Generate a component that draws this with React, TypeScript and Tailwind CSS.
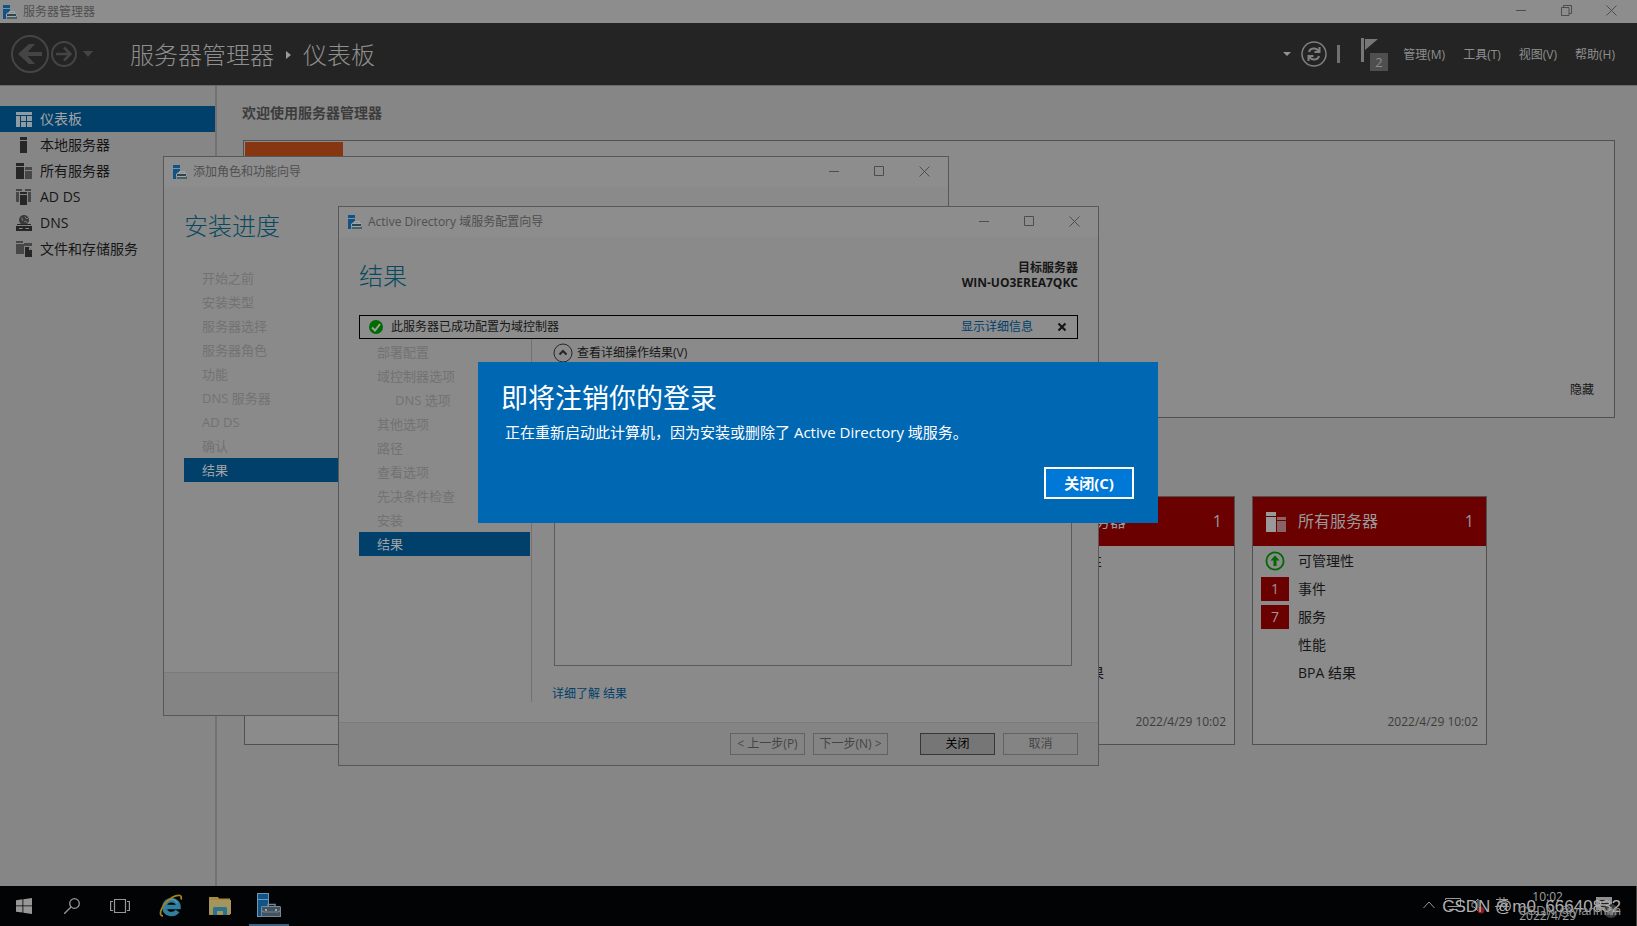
import type { ReactNode } from "react"

const menus = ["管理(M)", "工具(T)", "视图(V)", "帮助(H)"]

const navItems = [
  { label: "仪表板", icon: <DashboardIcon />, active: true },
  { label: "本地服务器", icon: <LocalServerIcon /> },
  { label: "所有服务器", icon: <AllServersIcon /> },
  { label: "AD DS", icon: <AdDsIcon /> },
  { label: "DNS", icon: <DnsIcon /> },
  { label: "文件和存储服务", icon: <StorageIcon /> },
]

const installSteps = [
  { label: "开始之前" },
  { label: "安装类型" },
  { label: "服务器选择" },
  { label: "服务器角色" },
  { label: "功能" },
  { label: "DNS 服务器" },
  { label: "AD DS" },
  { label: "确认" },
  { label: "结果", active: true },
]

const configSteps = [
  { label: "部署配置" },
  { label: "域控制器选项" },
  { label: "DNS 选项", nested: true },
  { label: "其他选项" },
  { label: "路径" },
  { label: "查看选项" },
  { label: "先决条件检查" },
  { label: "安装" },
  { label: "结果", active: true },
]

function ServerManagerIcon() {
  return (
    <svg viewBox="0 0 14 14" className="size-[14px]" aria-hidden="true">
      <path fill="#0f5488" d="M0 0h7v3H0zM0 4h7v2L4 8 3 9v5H0z" />
      <path fill="#2f444f" d="M4 9h10v5H4z" />
      <path fill="#46606d" d="M4 12h10v2H4z" />
      <path fill="none" stroke="#9fa6a9" d="M6.500 8.500v-2h5v2M3.500 11V9.500l1-1h8.500l.5 1V11M4 11.500h9.500" />
    </svg>
  )
}

function ServerManagerTaskIcon() {
  return (
    <svg viewBox="0 0 24 24" className="size-6" aria-hidden="true">
      <path fill="#7297ad" d="M0 0h12v24H0z" />
      <path fill="#0f5488" d="M1 1h10v5H1zM1 7h10v16H1z" />
      <path fill="none" stroke="#788790" strokeWidth="1.500" d="M11 13.500v-2h7v2" />
      <path fill="#788790" d="M5 13h18l1 1v10H4V14z" />
      <path fill="#3f5361" d="M5 14h18v3l-2 1.500H7L5 17zM5 18.500l1.500 1h15l1.500-1V23H5z" />
      <path fill="#9aa6ac" d="M8 16h2v2H8zM18 16h2v2h-2z" />
    </svg>
  )
}

function DashboardIcon() {
  return (
    <svg viewBox="0 0 16 16" className="size-4" fill="#8f9ba3" aria-hidden="true">
      <path d="M0 1h16v3H0zM0 5h4v11H0zM5 5h5v5H5zM11 5h5v5h-5zM5 11h5v5H5zM11 11h5v5h-5z" />
    </svg>
  )
}

function LocalServerIcon() {
  return (
    <svg viewBox="0 0 16 16" className="size-4" fill="#262626" aria-hidden="true">
      <path d="M4 0h7v3H4zM4 4h7v12H4z" />
    </svg>
  )
}

function AllServersIcon() {
  return (
    <svg viewBox="0 0 16 16" className="size-4" aria-hidden="true">
      <path fill="#262626" d="M0 0h8v3H0zM0 4h8v12H0z" />
      <path fill="#474747" d="M9 4h7v3H9zM9 8h7v8H9z" />
    </svg>
  )
}

function AdDsIcon() {
  return (
    <svg viewBox="0 0 16 16" className="size-4" aria-hidden="true">
      <path fill="#474747" d="M0 0h6v2H0zM0 3h3v10H0zM9 0h6v2H9zM12 3h3v10h-3z" />
      <path fill="#262626" d="M4 3h7v2H4zM4 6h7v10H4z" />
    </svg>
  )
}

function DnsIcon() {
  return (
    <svg viewBox="0 0 16 16" className="size-4" aria-hidden="true">
      <circle cx="8" cy="5" r="5" fill="#3a3a3a" />
      <path fill="none" stroke="#747474" d="M5 3l2 1-1 2M9 1.500l1 2 2 0M8 7l2-1 1 2" />
      <path fill="#262626" d="M1 9h14v2H1zM0 11h16v5H0z" />
      <path stroke="#858585" d="M3 13.500h3.500M9.500 13.500h3.500M0 10.500h16" />
    </svg>
  )
}

function StorageIcon() {
  return (
    <svg viewBox="0 0 16 16" className="size-4" aria-hidden="true">
      <path fill="#474747" d="M0 0h7v2H0zM0 3h8v10H0zM8 2h8v3H8z" />
      <path fill="#262626" d="M9 6h4l3 3v7H9z" />
      <path fill="#858585" d="M13 6l3 3h-3z" />
    </svg>
  )
}

function WindowControls({ restore = false }: { restore?: boolean }) {
  return (
    <div className="mb-0.5 ml-auto flex items-center gap-[34px]">
      <button type="button" aria-label="最小化" className="size-[11px]">
        <svg viewBox="0 0 11 11" className="size-[11px]" stroke="#4d4d4d">
          <path d="M0 5.500h10" />
        </svg>
      </button>
      <button type="button" aria-label="最大化" className="size-[11px]">
        <svg viewBox="0 0 11 11" className="size-[11px]" fill="none" stroke="#4d4d4d">
          {restore ? <path d="M.5 2.500h7.500v8H.5zM2.500 2.500v-2h8v8H8" /> : <path d="M.5.5h9v9h-9z" />}
        </svg>
      </button>
      <button type="button" aria-label="关闭窗口" className="size-[11px]">
        <svg viewBox="0 0 11 11" className="size-[11px]" stroke="#4d4d4d">
          <path d="M.5.5l10 10M10.500.5l-10 10" />
        </svg>
      </button>
    </div>
  )
}

function WizardTitleBar({ title }: { title: string }) {
  return (
    <div className="flex h-[30px] shrink-0 items-center bg-[#8d8d8d] pl-[9px] pr-[18px] text-xs text-[#4f4f4f]">
      <ServerManagerIcon />
      <span className="ml-1.5">{title}</span>
      <WindowControls />
    </div>
  )
}

type Step = { label: string; active?: boolean; nested?: boolean }

function StepList({ steps }: { steps: Step[] }) {
  return (
    <ul className="text-[13px] leading-6 text-[#727272]">
      {steps.map((step) => (
        <li
          key={step.label}
          className={
            step.active
              ? "bg-[#00406b] pl-[18px] text-[#a3a3a3]"
              : step.nested
                ? "pl-9"
                : "pl-[18px]"
          }
        >
          {step.label}
        </li>
      ))}
    </ul>
  )
}

function WizardButton({ children, primary = false }: { children: ReactNode; primary?: boolean }) {
  return (
    <button
      type="button"
      className={
        primary
          ? "h-[22px] w-[75px] whitespace-nowrap border border-[#363636] bg-[#767676] text-black"
          : "h-[22px] w-[75px] whitespace-nowrap border border-[#626262] text-[#444444]"
      }
    >
      {children}
    </button>
  )
}

function ServerCard({ title, icon }: { title: string; icon: ReactNode }) {
  return (
    <article className="flex h-[249px] w-[235px] shrink-0 flex-col border border-[#505050] bg-[#8b8b8b]">
      <h3 className="flex h-[49px] items-center bg-[#6b0000] pl-[13px] pr-3 text-base text-[#999999]">
        {icon}
        <span className="mb-0.5 ml-3">{title}</span>
        <span className="mb-0.5 ml-auto">1</span>
      </h3>
      <ul className="pt-px text-sm leading-7 text-[#161616]">
        <li className="flex items-center pl-2">
          <span className="flex w-7 justify-center">
            <svg viewBox="0 0 20 20" className="size-5" fill="none" stroke="#006800" strokeWidth="1.800">
              <circle cx="10" cy="10" r="8.600" />
              <path fill="#006800" stroke="none" d="M10 4.500l4.500 5h-3V15h-3V9.500h-3z" />
            </svg>
          </span>
          <span className="ml-[9px]">可管理性</span>
        </li>
        <li className="flex items-center pl-2">
          <span className="h-6 w-7 bg-[#6b0000] text-center leading-6 text-[#999999]">1</span>
          <span className="ml-[9px]">事件</span>
        </li>
        <li className="flex items-center pl-2">
          <span className="h-6 w-7 bg-[#6b0000] text-center leading-6 text-[#999999]">7</span>
          <span className="ml-[9px]">服务</span>
        </li>
        <li className="pl-[45px]">性能</li>
        <li className="pl-[45px]">BPA 结果</li>
      </ul>
      <time className="mb-3.5 mt-auto pr-2 text-right text-xs text-[#3c3c3c]">2022/4/29 10:02</time>
    </article>
  )
}

function Header() {
  return (
    <header className="flex h-[62px] shrink-0 items-center bg-[#242424] pl-[11px] pr-[22px] text-[#8f8f8f]">
      <button type="button" aria-label="后退">
        <svg viewBox="0 0 38 38" className="size-[38px]" fill="none" stroke="#454545">
          <circle cx="19" cy="19" r="18" strokeWidth="2" />
          <path strokeWidth="4" d="M31 19H10" />
          <path fill="#454545" stroke="none" d="M7 19L18 9h6l-9 10 9 10h-6z" />
        </svg>
      </button>
      <button type="button" aria-label="前进" className="ml-0.5">
        <svg viewBox="0 0 26 26" className="size-[26px]" fill="none" stroke="#454545">
          <circle cx="13" cy="13" r="12" strokeWidth="2" />
          <path strokeWidth="2.500" d="M5 13h14M13 6.500l6.500 6.500-6.500 6.500" />
        </svg>
      </button>
      <svg viewBox="0 0 10 6" className="ml-1.5 h-1.5 w-2.5" fill="#454545" aria-hidden="true">
        <path d="M0 0h10L5 6z" />
      </svg>
      <h1 className="ml-[37px] flex items-center pt-0.5 text-2xl font-light">
        服务器管理器
        <svg viewBox="0 0 5 8" className="mx-3 h-2 w-[5px]" fill="#9a9a9a" aria-hidden="true">
          <path d="M0 0l5 4-5 4z" />
        </svg>
        仪表板
      </h1>
      <div className="ml-auto flex items-center">
        <svg viewBox="0 0 8 4" className="h-1 w-2" fill="#929292" aria-hidden="true">
          <path d="M0 0h8L4 4z" />
        </svg>
        <button type="button" aria-label="刷新" className="ml-2.5">
          <svg viewBox="0 0 26 26" className="size-[26px]" fill="none" stroke="#808080">
            <circle cx="13" cy="13" r="12" strokeWidth="1.500" />
            <path strokeWidth="2" d="M8 11c1-4 7-5 9.500-1M18.500 6v5h-5M18 15c-1 4-7 5-9.500 1M7.500 20v-5h5" />
          </svg>
        </button>
        <span className="ml-2.5 h-[18px] w-[3px] bg-[#707070]" />
        <button type="button" aria-label="通知" className="ml-[21px] h-9 w-7">
          <svg viewBox="0 0 28 36" className="h-9 w-7" aria-hidden="true">
            <path fill="#777777" d="M0 2h3v24H0zM4 3h13L4 14z" />
            <path fill="#4f4f4f" d="M9 17h18v18H9z" />
            <text x="18" y="31" fill="#8c8c8c" fontSize="13" textAnchor="middle">
              2
            </text>
          </svg>
        </button>
        <nav className="ml-3.5 flex gap-[18px] pt-0.5 text-xs">
          {menus.map((menu) => (
            <button type="button" key={menu}>
              {menu}
            </button>
          ))}
        </nav>
      </div>
    </header>
  )
}

function InstallWizard() {
  return (
    <section className="absolute left-[163px] top-[156px] flex h-[560px] w-[786px] flex-col border border-[#585858] bg-[#8a8a8a]">
      <WizardTitleBar title="添加角色和功能向导" />
      <h2 className="ml-5 mt-[23px] text-2xl font-light leading-8 text-[#07495f]">安装进度</h2>
      <div className="ml-5 mt-6 w-[170px]">
        <StepList steps={installSteps} />
      </div>
      <div className="mt-auto h-[43px] border-t border-[#7a7a7a] bg-[#848484]" />
    </section>
  )
}

function ConfigWizard() {
  return (
    <section className="absolute left-[338px] top-[206px] flex h-[560px] w-[761px] flex-col border border-[#585858] bg-[#8a8a8a] text-xs text-[#161616]">
      <WizardTitleBar title="Active Directory 域服务配置向导" />
      <div className="flex items-start justify-between px-5 pt-[23px]">
        <h2 className="text-2xl font-light leading-8 text-[#07495f]">结果</h2>
        <p className="text-right font-bold leading-[15px]">
          目标服务器
          <br />
          WIN-UO3EREA7QKC
        </p>
      </div>
      <div className="mx-5 mt-[23px] flex h-6 shrink-0 items-center border border-black bg-[#8d8d8d] pl-[9px] pr-2.5">
        <svg viewBox="0 0 14 14" className="size-3.5" aria-hidden="true">
          <circle cx="7" cy="7" r="7" fill="#006b00" />
          <path fill="none" stroke="#a0a0a0" strokeWidth="2" d="M3 7.500l3 3 5-6.500" />
        </svg>
        <span className="ml-2">此服务器已成功配置为域控制器</span>
        <a href="#details" className="ml-auto text-[#00406b]">
          显示详细信息
        </a>
        <button type="button" aria-label="关闭消息" className="ml-6">
          <svg viewBox="0 0 10 10" className="size-2.5" stroke="#161616" strokeWidth="2.200">
            <path d="M1.500 1.500l7 7M8.500 1.500l-7 7" />
          </svg>
        </button>
      </div>
      <div className="flex grow pb-5 pl-5 pr-[26px]">
        <div className="w-[171px] pt-px">
          <StepList steps={configSteps} />
        </div>
        <div className="ml-px w-px bg-[#727272]" />
        <div className="flex grow flex-col pl-[22px] pt-1">
          <button type="button" className="-ml-px flex h-5 items-center">
            <svg viewBox="0 0 20 20" className="size-5" fill="none" stroke="#262626">
              <circle cx="10" cy="10" r="9" />
              <path strokeWidth="2" d="M6.500 11.500L10 8l3.500 3.500" />
            </svg>
            <span className="ml-1">查看详细操作结果(V)</span>
          </button>
          <div className="mt-1 grow border border-[#5b5b5b] bg-[#8c8c8c]" />
          <a href="#learn" className="-ml-0.5 mt-5 leading-4 text-[#00406b]">
            详细了解 结果
          </a>
        </div>
      </div>
      <div className="flex h-[43px] shrink-0 items-center justify-end border-t border-[#7a7a7a] bg-[#848484] pr-5">
        <WizardButton>&lt; 上一步(P)</WizardButton>
        <span className="w-2" />
        <WizardButton>下一步(N) &gt;</WizardButton>
        <span className="w-8" />
        <WizardButton primary>关闭</WizardButton>
        <span className="w-2" />
        <WizardButton>取消</WizardButton>
      </div>
    </section>
  )
}

function LogoffDialog() {
  return (
    <section
      role="dialog"
      aria-labelledby="logoff-title"
      className="absolute left-[478px] top-[362px] flex h-[161px] w-[680px] flex-col bg-[#0067b3] pb-6 pl-[23px] pr-6 pt-[18px] text-white"
    >
      <h2 id="logoff-title" className="text-[27px] leading-9">
        即将注销你的登录
      </h2>
      <p className="ml-1 mt-1 text-[15px] leading-6">
        正在重新启动此计算机，因为安装或删除了 Active Directory 域服务。
      </p>
      <button
        type="button"
        className="ml-auto mt-auto h-8 w-[90px] border-2 border-white bg-[#0078d7] text-[15px] font-bold leading-6"
      >
        关闭(C)
      </button>
    </section>
  )
}

function Taskbar() {
  return (
    <footer className="relative flex h-10 shrink-0 items-center bg-[#020305] pl-4">
      <button type="button" aria-label="开始">
        <svg viewBox="0 0 16 16" className="size-4" fill="#979797">
          <path d="M0 2.200l6.500-.9v6.200H0zM7.300 1.200L16 0v7.500H7.300zM0 8.300h6.500v6.300L0 13.700zM7.300 8.300H16V16l-8.700-1.300z" />
        </svg>
      </button>
      <button type="button" aria-label="搜索" className="ml-8">
        <svg viewBox="0 0 16 16" className="size-4" fill="none" stroke="#979797" strokeWidth="1.300">
          <circle cx="10.500" cy="5.500" r="4.800" />
          <path d="M7 9l-7 7" />
        </svg>
      </button>
      <button type="button" aria-label="任务视图" className="ml-[30px]">
        <svg viewBox="0 0 20 16" className="h-4 w-5" fill="none" stroke="#979797" strokeWidth="1.200">
          <path d="M4.500 1.500h11v13h-11zM3 3.500H.6v9H3M17 3.500h2.400v9H17" />
        </svg>
      </button>
      <button type="button" aria-label="Internet Explorer" className="ml-[29px]">
        <svg viewBox="0 0 24 24" className="size-6" fill="none">
          <path stroke="#2f7f9d" strokeWidth="4.500" d="M5.500 13h14c0-9-14-9-14 0 0 8.500 10 8.500 13 4" />
          <path stroke="#76a9b5" strokeWidth="1" d="M7 9c3-5 9-5 11 0" />
          <path stroke="#a78218" strokeWidth="1.800" d="M4 22c-3 0-4-4 1-11S17 .5 21 1.500c1.500.5 1.500 2 1 4" />
        </svg>
      </button>
      <button type="button" aria-label="文件资源管理器" className="ml-[26px]">
        <svg viewBox="0 0 22 18" className="h-[18px] w-[22px]">
          <path fill="#a88c3e" d="M0 0h9l1 1.500h11V18H0z" />
          <path fill="#a4955e" d="M1 3h21v14H0V4z" />
          <path fill="#287391" d="M4 11l1-1h12l1 1v7h-4v-4H8v4H4z" />
        </svg>
      </button>
      <button type="button" aria-label="服务器管理器" className="ml-[18px] flex h-10 w-10 items-center justify-center border-b-2 border-[#3b6281]">
        <ServerManagerTaskIcon />
      </button>

      <div className="ml-auto flex h-10 items-center border-r border-[#454545] pr-4 text-xs text-[#a0a0a0]">
        <svg viewBox="0 0 12 8" className="mb-0.5 h-2 w-3" fill="none" stroke="#979797" aria-hidden="true">
          <path d="M.5 7L6 1l5.500 6" />
        </svg>
        <svg viewBox="0 0 64 20" className="mb-0.5 ml-2.5 h-5 w-16" fill="none" stroke="#979797" aria-hidden="true">
          <path d="M.5 5V3.500h15v8h-13M4 14.500h8" />
          <path d="M27 8h2l4-4v12l-4-4h-2z" />
          <circle cx="36" cy="15" r="3.500" fill="#8a1c20" stroke="none" />
          <path d="M51 4.500h12M55 2v4M59 2v4M53 7h8v4h-8zM50 11.500h14M57 7v4l-5 5M57 11l6 5" />
        </svg>
        <div className="ml-2.5 text-center leading-[19px]">
          <div>10:02</div>
          <div>2022/4/29</div>
        </div>
        <svg viewBox="0 0 24 24" className="ml-5 h-6 w-6" aria-hidden="true">
          <path fill="#8f8f8f" d="M0 3h16v13h-4l-3 3v-3H0z" />
          <path stroke="#222222" d="M3 6.500h10M3 9.500h10M3 12.500h7" />
          <circle cx="15" cy="17" r="7" fill="#3a3a3a" />
          <path fill="#777777" d="M14 13h2v5h2l-3 4-3-4h2z" />
        </svg>
      </div>

      {/* watermarks over the tray */}
      <span className="pointer-events-none absolute right-4 top-[11px] font-['Liberation_Sans',sans-serif] text-[17px] leading-5 text-[#b0b0b0]">
        CSDN @m0_66640832
      </span>
      <span className="pointer-events-none absolute right-4 top-[15px] font-['Liberation_Sans',sans-serif] text-[13px] leading-5 text-[#8f8f8f]">
        CSDN @yianmnn
      </span>
    </footer>
  )
}

export default function App() {
  return (
    <div
      lang="zh-CN"
      className="relative flex min-h-screen flex-col overflow-hidden bg-[#868686] font-['Open_Sans','Noto_Sans_CJK_SC',sans-serif]"
    >
      <div className="flex h-[23px] shrink-0 items-center bg-[#8d8d8d] pl-[3px] pr-5 text-xs text-[#4f4f4f]">
        <ServerManagerIcon />
        <span className="ml-1.5">服务器管理器</span>
        <WindowControls restore />
      </div>
      <Header />

      <div className="flex grow border-t border-[#6a6a6a]">
        <nav className="w-[217px] shrink-0 border-r-2 border-[#727272] pt-5">
          {navItems.map((item) => (
            <a
              key={item.label}
              href="#nav"
              className={
                item.active
                  ? "flex h-[26px] items-center bg-[#00406b] pl-4 text-sm text-[#a3a3a3]"
                  : "flex h-[26px] items-center pl-4 text-sm text-[#161616]"
              }
            >
              {item.icon}
              <span className="ml-2">{item.label}</span>
            </a>
          ))}
        </nav>

        <main className="min-w-0 grow pl-[25px] pr-[22px] pt-[15px]">
          <h2 className="text-sm font-bold leading-6 text-[#3c3c3c]">欢迎使用服务器管理器</h2>
          <div className="ml-px mt-[15px] flex h-[278px] items-end justify-between border border-[#505050] bg-[#8b8b8b] p-px">
            <div className="h-full w-[98px] bg-[#873612]" />
            <button type="button" className="mb-3.5 mr-[19px] text-xs leading-6 text-[#161616]">
              隐藏
            </button>
          </div>
          <div className="mt-[78px] flex gap-[17px] pl-0.5">
            <div className="h-[249px] w-[235px] shrink-0 border border-[#505050] bg-[#8b8b8b]" />
            <div className="h-[249px] w-[235px] shrink-0 border border-[#505050] bg-[#8b8b8b]" />
            <div className="h-[249px] w-[235px] shrink-0 border border-[#505050] bg-[#8b8b8b]" />
            <ServerCard
              title="本地服务器"
              icon={
                <svg viewBox="0 0 20 20" className="size-5" fill="#999999" aria-hidden="true">
                  <path d="M5 0h9v4H5zM5 5h9v15H5z" />
                </svg>
              }
            />
            <ServerCard
              title="所有服务器"
              icon={
                <svg viewBox="0 0 20 20" className="size-5" aria-hidden="true">
                  <path fill="#999999" d="M0 0h10v4H0zM0 5h10v15H0z" />
                  <path fill="#8a6464" d="M11 5h9v3h-9zM11 9h9v11h-9z" />
                </svg>
              }
            />
          </div>
        </main>
      </div>

      <Taskbar />
      <InstallWizard />
      <ConfigWizard />
      <LogoffDialog />
    </div>
  )
}
